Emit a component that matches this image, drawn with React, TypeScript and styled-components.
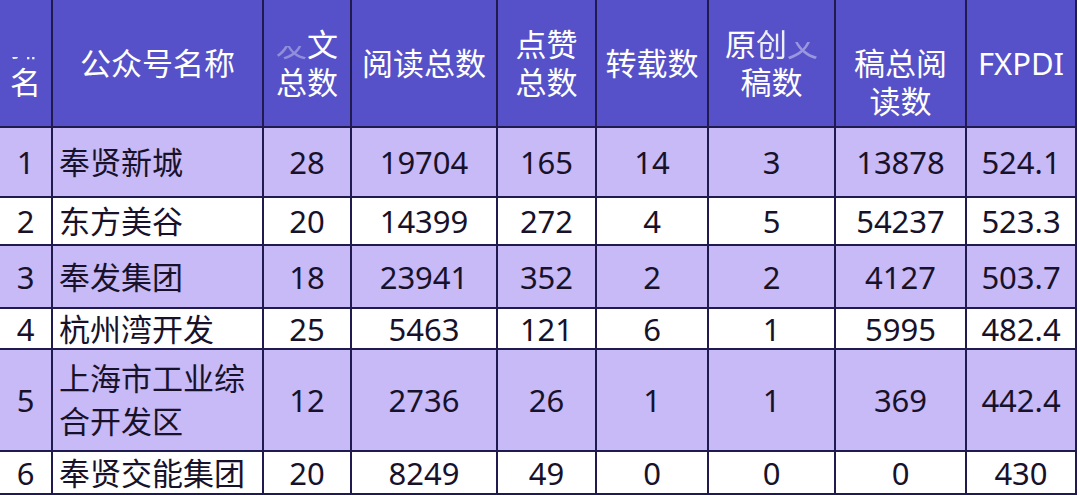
import React from "react";
import styled, { createGlobalStyle } from "styled-components";

const Global = createGlobalStyle`
  html, body { margin: 0; padding: 0; background: #ffffff; }
  body { font-family: "Noto Sans", "Noto Sans CJK SC", sans-serif; }
`;

const COLS = "51px 209px 86px 144px 97px 110px 125px 129px 108px";
const LINE = "#201b4e";

const Table = styled.div`
  width: 1077px;
  display: flex;
  flex-direction: column;
  gap: 2px;
  background: ${LINE};
  padding: 0 2px 2px 0;
  box-sizing: border-box;
`;

const Row = styled.div<{ $h: number }>`
  display: grid;
  grid-template-columns: ${COLS};
  gap: 2px;
  height: ${(p) => p.$h}px;
`;

const HeadCell = styled.div`
  background: #5651c8;
  color: #ffffff;
  font-family: "Noto Sans", "Noto Sans CJK SC", sans-serif;
  font-size: 31px;
  line-height: 38px;
  display: flex;
  flex-direction: column;
  align-items: center;
  justify-content: center;
  text-align: center;
  white-space: nowrap;
  overflow: hidden;
`;

const Line = styled.span`
  display: block;
`;

const Faded = styled.span<{ $cut: number; $alpha?: number }>`
  opacity: ${(p) => p.$alpha ?? 1};
  -webkit-mask-image: linear-gradient(to bottom, transparent ${(p) => p.$cut}%, #000 ${(p) => p.$cut}%);
  mask-image: linear-gradient(to bottom, transparent ${(p) => p.$cut}%, #000 ${(p) => p.$cut}%);
`;

const Cell = styled.div<{ $alt: boolean; $left?: boolean }>`
  background: ${(p) => (p.$alt ? "#c8b9f7" : "#ffffff")};
  color: #17122a;
  font-family: "Noto Sans", "Noto Sans CJK SC", sans-serif;
  font-size: 31px;
  line-height: 36px;
  display: flex;
  align-items: center;
  justify-content: ${(p) => (p.$left ? "flex-start" : "center")};
  padding: ${(p) => (p.$left ? "0 0 0 6px" : "0")};
  text-align: ${(p) => (p.$left ? "left" : "center")};
  overflow: hidden;
`;

const NameText = styled.span<{ $lh: number }>`
  display: block;
  max-width: 190px;
  line-height: ${(p) => p.$lh}px;
`;

type Rec = {
  rank: string;
  name: string;
  vals: string[];
  h: number;
  lh: number;
};

const rows: Rec[] = [
  { rank: "1", name: "奉贤新城", vals: ["28", "19704", "165", "14", "3", "13878", "524.1"], h: 68, lh: 36 },
  { rank: "2", name: "东方美谷", vals: ["20", "14399", "272", "4", "5", "54237", "523.3"], h: 46, lh: 36 },
  { rank: "3", name: "奉发集团", vals: ["18", "23941", "352", "2", "2", "4127", "503.7"], h: 61, lh: 36 },
  { rank: "4", name: "杭州湾开发", vals: ["25", "5463", "121", "6", "1", "5995", "482.4"], h: 39, lh: 36 },
  { rank: "5", name: "上海市工业综合开发区", vals: ["12", "2736", "26", "1", "1", "369", "442.4"], h: 100, lh: 43 },
  { rank: "6", name: "奉贤交能集团", vals: ["20", "8249", "49", "0", "0", "0", "430"], h: 41, lh: 36 },
];

export default function App() {
  return (
    <>
      <Global />
      <Table>
        <Row $h={126}>
          <HeadCell>
            <Line>
              <Faded $cut={82} $alpha={0.9}>排</Faded>
            </Line>
            <Line>名</Line>
          </HeadCell>
          <HeadCell>公众号名称</HeadCell>
          <HeadCell>
            <Line>
              <Faded $cut={55} $alpha={0.35}>发</Faded>文
            </Line>
            <Line>总数</Line>
          </HeadCell>
          <HeadCell>阅读总数</HeadCell>
          <HeadCell>
            <Line>点赞</Line>
            <Line>总数</Line>
          </HeadCell>
          <HeadCell>转载数</HeadCell>
          <HeadCell>
            <Line>
              原<Faded $cut={0} $alpha={0.9}>创</Faded>
              <Faded $cut={45} $alpha={0.4}>文</Faded>
            </Line>
            <Line>稿数</Line>
          </HeadCell>
          <HeadCell>
            <Line>
              <Faded $cut={100} $alpha={0.1}>原创文</Faded>
            </Line>
            <Line>稿总阅</Line>
            <Line>读数</Line>
          </HeadCell>
          <HeadCell>FXPDI</HeadCell>
        </Row>
        {rows.map((r, i) => {
          const alt = i % 2 === 0;
          return (
            <Row key={r.rank} $h={r.h}>
              <Cell $alt={alt}>{r.rank}</Cell>
              <Cell $alt={alt} $left>
                <NameText $lh={r.lh}>{r.name}</NameText>
              </Cell>
              {r.vals.map((v, j) => (
                <Cell key={j} $alt={alt}>
                  {v}
                </Cell>
              ))}
            </Row>
          );
        })}
      </Table>
    </>
  );
}
